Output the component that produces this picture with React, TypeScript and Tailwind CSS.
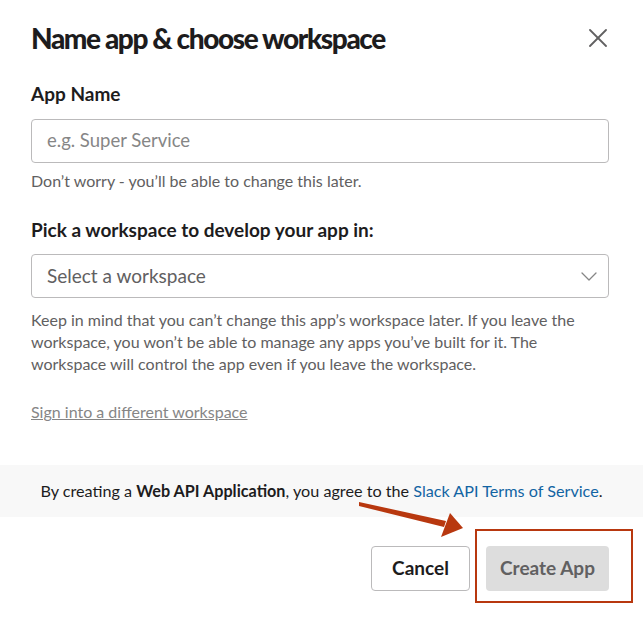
function Label({ children }: { children: React.ReactNode }) {
  return <div className="text-[19px] leading-6 font-bold text-[#1d1c1d]">{children}</div>;
}

export default function App() {
  return (
    <div className="relative h-[617px] w-[643px] overflow-hidden bg-white font-['Lato',sans-serif] text-[#1d1c1d]">
      <div className="pt-[20px] pr-[34px] pl-[31px]">
        <div className="flex items-center justify-between">
          <h1 className="text-[28px] leading-9 font-black tracking-[-0.05em]">
            Name app &amp; choose workspace
          </h1>
          <button className="mr-[2px] text-[#616061]">
            <svg width="18" height="18" viewBox="0 0 18 18" fill="none" stroke="currentColor" strokeWidth="1.8" strokeLinecap="round">
              <line x1="1" y1="1" x2="17" y2="17" />
              <line x1="17" y1="1" x2="1" y2="17" />
            </svg>
          </button>
        </div>

        <div className="mt-[26px]">
          <Label>App Name</Label>
          <div className="mt-[13px] flex h-[44px] items-center rounded-[4px] border border-[#bbbabb] px-[15px] text-[18.5px] text-[#868686]">
            e.g. Super Service
          </div>
          <p className="mt-[7px] text-[16px] leading-[22px] text-[#616061]">
            Don’t worry - you’ll be able to change this later.
          </p>
        </div>

        <div className="mt-[26px]">
          <Label>Pick a workspace to develop your app in:</Label>
          <div className="mt-[12px] flex h-[44px] items-center justify-between rounded-[4px] border border-[#bbbabb] pr-[11px] pl-[15px] text-[19px] text-[#616061]">
            Select a workspace
            <svg width="16" height="9" viewBox="0 0 16 9" fill="none" stroke="#868686" strokeWidth="1.3" strokeLinecap="round" strokeLinejoin="round">
              <polyline points="1,1 8,8 15,1" />
            </svg>
          </div>
          <p className="mt-[11px] text-[16px] leading-[22px] text-[#616061]">
            Keep in mind that you can’t change this app’s workspace later. If you leave the
            workspace, you won’t be able to manage any apps you’ve built for it. The workspace
            will control the app even if you leave the workspace.
          </p>
          <a className="mt-[26px] block text-[16px] leading-[22px] text-[#868686] underline">
            Sign into a different workspace
          </a>
        </div>
      </div>

      <div className="mt-[42px] flex h-[52px] items-center justify-center bg-[#f8f8f8] text-[16.2px] text-[#1d1c1d]">
        <span>
          By creating a <b>Web API Application</b>, you agree to the{" "}
          <span className="text-[#1264a3]">Slack API Terms of Service</span>.
        </span>
      </div>

      <div className="flex justify-end gap-4 pt-[29px] pr-[34px]">
        <button className="h-[45px] w-[99px] rounded-[4px] border border-[#bbbabb] text-[19px] font-bold text-[#1d1c1d]">
          Cancel
        </button>
        <button className="h-[45px] w-[123px] rounded-[4px] bg-[#dddddd] text-[19px] font-bold text-[#616061]">
          Create App
        </button>
      </div>

      {/* annotation overlay */}
      <div className="absolute top-[529px] left-[475px] h-[74px] w-[158px] border-[2.5px] border-[#b8380f]" />
      <svg className="absolute top-[495px] left-[355px]" width="115" height="50" viewBox="0 0 115 50">
        <polygon points="4,7 91,26 89,32 4,11" fill="#b8380f" />
        <polygon points="108,33 86,42 95,18" fill="#b8380f" />
      </svg>
    </div>
  );
}
